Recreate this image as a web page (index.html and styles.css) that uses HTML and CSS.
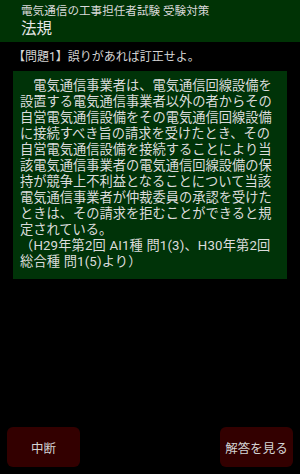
FILE: index.html
```html
<!DOCTYPE html>
<html lang="ja">
<head>
<meta charset="utf-8">
<link rel="stylesheet" href="styles.css">
</head>
<body>
<div class="screen">
  <header class="header">
    <div class="app-title">電気通信の工事担任者試験 受験対策</div>
    <div class="subject">法規</div>
  </header>
  <div class="label">【問題1】誤りがあれば訂正せよ。</div>
  <div class="question">　電気通信事業者は、電気通信回線設備を設置する電気通信事業者以外の者からその自営電気通信設備をその電気通信回線設備に接続すべき旨の請求を受けたとき、その自営電気通信設備を接続することにより当該電気通信事業者の電気通信回線設備の保持が競争上不利益となることについて当該電気通信事業者が仲裁委員の承認を受けたときは、その請求を拒むことができると規定されている。<br><span class="source">（H29年第2回 AI1種 問1(3)、H30年第2回<br>総合種 問1(5)より）</span></div>
  <div class="actions">
    <button class="btn">中断</button>
    <button class="btn">解答を見る</button>
  </div>
</div>
</body>
</html>
```
FILE: styles.css
```css
html, body {
  margin: 0;
  padding: 0;
  background: #000;
}
body {
  font-family: Roboto, "Noto Sans CJK JP", sans-serif;
  color: #d4d4d4;
}
.screen {
  height: 474px;
  display: flex;
  flex-direction: column;
}
.header {
  background: #003305;
  height: 42px;
  padding-left: 21px;
  box-sizing: border-box;
  padding-top: 3px;
}
.app-title {
  font-size: 11.6px;
  line-height: 17px;
  color: #d8d8d8;
}
.subject {
  font-size: 15.5px;
  line-height: 19px;
  color: #e6e6e6;
}
.label {
  font-size: 12px;
  line-height: 16px;
  margin: 7px 0 0 13px;
  color: #d4d4d4;
}
.question {
  margin: 6px 13px 0 13px;
  background: #003308;
  padding: 7px 7px 9px 7px;
  font-size: 13.25px;
  line-height: 16px;
  color: #dcdcdc;
}
.source {
  letter-spacing: 0.15px;
}
.actions {
  margin-top: auto;
  display: flex;
  justify-content: space-between;
  padding: 0 7px 7px 7px;
}
.btn {
  width: 73px;
  height: 40px;
  background: #330000;
  border: none;
  border-radius: 6px;
  color: #d4d4d4;
  font-family: Roboto, "Noto Sans CJK JP", sans-serif;
  font-size: 12.5px;
  padding: 0;
}
```
